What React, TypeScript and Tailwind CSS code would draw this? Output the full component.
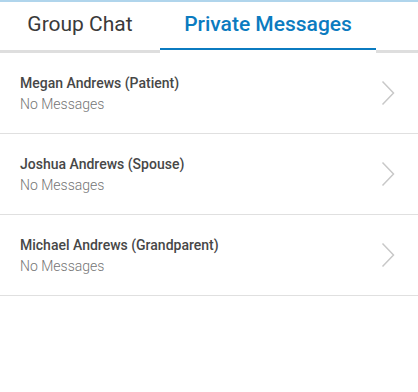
const contacts = [
  { name: "Megan Andrews (Patient)", last: "No Messages" },
  { name: "Joshua Andrews (Spouse)", last: "No Messages" },
  { name: "Michael Andrews (Grandparent)", last: "No Messages" },
];

const ChevronRight = () => (
  <svg width="14" height="26" viewBox="0 0 14 26" fill="none" className="shrink-0">
    <path d="M1.5 1.5L12.5 13L1.5 24.5" stroke="#c8c8c8" strokeWidth="1.5" />
  </svg>
);

const Tab = ({ label, active, width }: { label: string; active?: boolean; width: string }) => (
  <div className={`flex flex-col ${width}`}>
    <div
      className={`flex h-[46px] items-center justify-center text-[21px] ${
        active ? "font-medium text-[#0b7bc0]" : "font-normal text-[#3a3a3a]"
      }`}
    >
      {label}
    </div>
    <div className={`h-[2px] ${active ? "bg-[#0b7bc0]" : "bg-white"}`} />
    <div className={`h-[3px] ${active ? "bg-white" : "bg-[#dedede]"}`} />
  </div>
);

export default function App() {
  return (
    <div className="h-[392px] w-[418px] bg-white font-['Roboto',sans-serif]">
      <div className="h-[2px] bg-[#b0d5ec]" />
      <div className="flex">
        <Tab label="Group Chat" width="w-[160px]" />
        <Tab label="Private Messages" active width="w-[216px]" />
        <Tab label="" width="flex-1" />
      </div>
      <div className="flex flex-col">
        {contacts.map((c) => (
          <div
            key={c.name}
            className="flex h-[81px] items-center justify-between border-b border-[#e0e0e0] pl-5 pr-[23px]"
          >
            <div className="flex flex-col gap-px">
              <div className="text-[14px] leading-5 font-medium text-[#474747]">{c.name}</div>
              <div className="text-[14px] leading-5 font-light text-[#757575]">{c.last}</div>
            </div>
            <ChevronRight />
          </div>
        ))}
      </div>
    </div>
  );
}
